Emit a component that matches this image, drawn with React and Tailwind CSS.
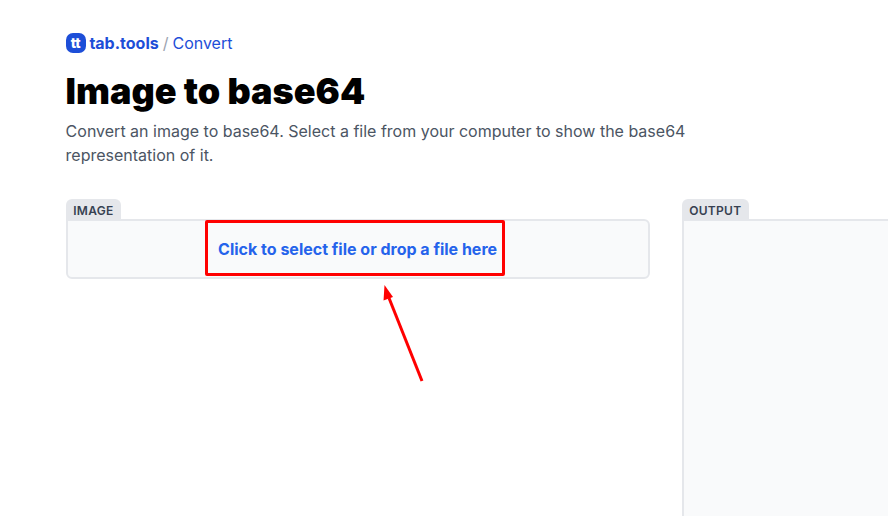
export default function App() {
  const inter = { fontFamily: '"Inter", sans-serif' };
  return (
    <div style={inter} className="relative w-[888px] h-[516px] overflow-hidden bg-white">
      <div className="flex flex-col pt-[32px] pl-[65.6px]">
        <div className="flex items-center h-[22px] text-[16px] leading-[22px] text-[#1d4ed8]">
          <span className="flex items-center justify-center w-[20px] h-[20px] rounded-[7px] bg-[#1d4ed8] text-white text-[14px] font-extrabold leading-none tracking-[-0.3px]">tt</span>
          <span className="ml-[3.8px] font-bold">tab.tools</span>
          <span className="mx-[4px] text-[#9ca3af]">/</span>
          <span>Convert</span>
        </div>
        <h1 className="mt-[17px] text-[36px] leading-[40px] font-black text-black">Image to base64</h1>
        <p className="mt-[8px] w-[640px] text-[16px] leading-[24px] text-[#4b5563]">
          Convert an image to base64. Select a file from your computer to show the base64 representation of it.
        </p>
        <div className="mt-[32px] flex gap-[32px] items-start">
          <div className="flex flex-col w-[584px] shrink-0">
            <div className="self-start h-[21px] px-[7.6px] pt-[3px] rounded-t-md bg-[#e5e7eb] text-[12px] leading-[18px] font-semibold tracking-wide text-[#374151]">IMAGE</div>
            <div className="h-[60px] -mt-px flex items-center justify-center rounded-b-md rounded-tr-md border-2 border-[#e5e7eb] bg-[#f9fafb] text-[16px] font-bold text-[#2563eb]">
              Click to select file or drop a file here
            </div>
          </div>
          <div className="flex flex-col w-[400px] shrink-0">
            <div className="self-start h-[21px] px-[7.6px] pt-[3px] rounded-t-md bg-[#e5e7eb] text-[12px] leading-[18px] font-semibold tracking-wide text-[#374151]">OUTPUT</div>
            <div className="h-[400px] -mt-px rounded-b-md rounded-tr-md border-2 border-[#e5e7eb] bg-[#f9fafb]" />
          </div>
        </div>
      </div>
      <div className="absolute left-[205px] top-[220px] w-[300px] h-[56px] border-[3px] border-[#ff0000] rounded-[2px]" />
      <svg className="absolute left-[375px] top-[280px]" width="55" height="105" viewBox="0 0 55 105" fill="none">
        <line x1="47" y1="101" x2="14" y2="18" stroke="#ff0000" strokeWidth="3" />
        <polygon points="9.5,5 18,17 8.5,20.5" fill="#ff0000" />
      </svg>
    </div>
  );
}
